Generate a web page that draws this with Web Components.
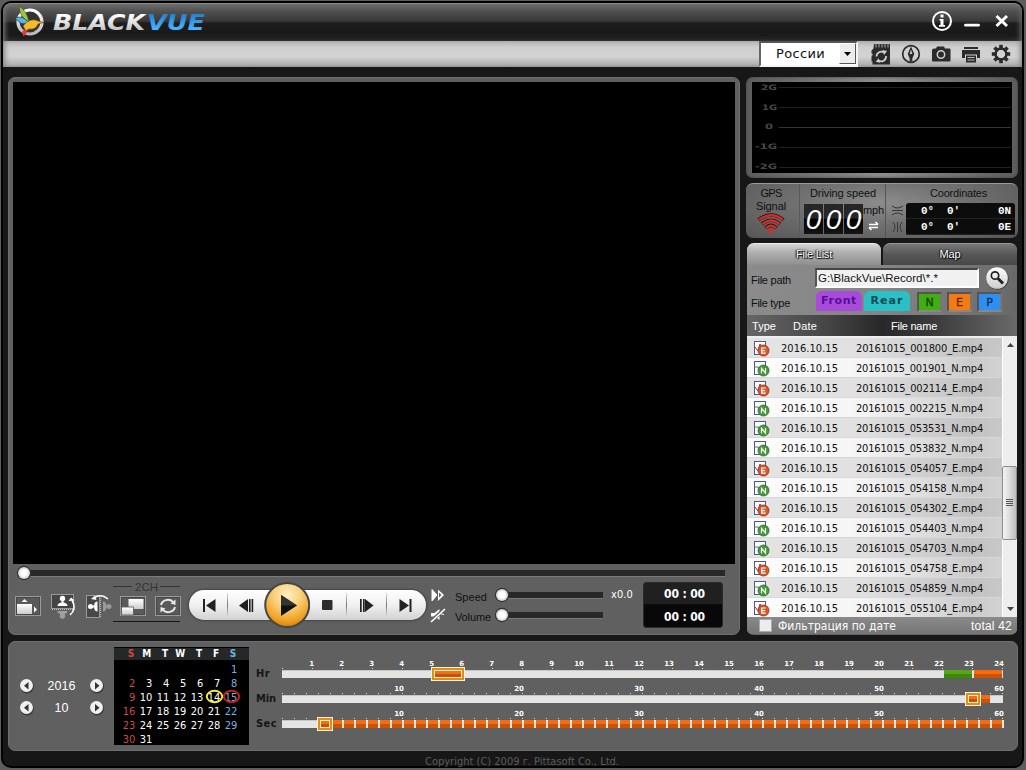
<!DOCTYPE html>
<html lang="en">
<head>
<meta charset="utf-8">
<title>BlackVue</title>
<style>
  body {
    margin: 0;
    width: 1026px;
    height: 770px;
    overflow: hidden;
    background: #5c5e5d;
    font-family: "Liberation Sans", sans-serif;
  }
</style>
</head>
<body>
<bv-app></bv-app>

<script>
// inline icon; the viewBox uses window coordinates
const icon = (x, y, w, h, body) =>
  `<svg width="${w}" height="${h}" viewBox="${x} ${y} ${w} ${h}">${body}</svg>`;

const base = `
  * { box-sizing: border-box; }
  svg { display: block; flex: none; }
`;

// label with a fixed width, the spare room goes between the letters
class BvLabel extends HTMLElement {
  constructor() {
    super();
    this.attachShadow({ mode: "open" });
  }

  connectedCallback() {
    this.shadowRoot.innerHTML = `
      <style>
        :host { display: block; flex: none; width: ${this.getAttribute("w")}px; }
        span { display: inline-block; white-space: pre; }
      </style><span><slot></slot></span>`;
    const span = this.shadowRoot.querySelector("span");
    const want = Number(this.getAttribute("w"));
    const count = this.textContent.length;
    const real = span.getBoundingClientRect().width;
    this.style.letterSpacing = (want - real) / count + "px";
  }
}
customElements.define("bv-label", BvLabel);

class BvTitle extends HTMLElement {
  constructor() {
    super();
    this.attachShadow({ mode: "open" });
    this.shadowRoot.innerHTML = `
      <style>
        ${base}
        :host {
          display: flex;
          justify-content: space-between;
          height: 38px;
          border-radius: 8px 8px 0 0;
          border-top: 1px solid #8a8a8a;
          background: linear-gradient(#6e6e6e 0, #505050 20%, #383838 46%, #1d1d1d 52%, #191919 82%, #262626 100%);
          box-shadow: inset 5px 0 5px -3px #777, inset -5px 0 5px -3px #666;
        }
      </style>
      ${icon(3, 4, 220, 36, `
        <defs>
          <linearGradient id="a" x2="0" y2="1"><stop offset=".2" stop-color="#fff"/><stop offset="1" stop-color="#b0b0b0"/></linearGradient>
          <linearGradient id="b" x2="0" y2="1"><stop offset=".2" stop-color="#2484d0"/><stop offset=".8" stop-color="#4db4ff"/></linearGradient>
          <linearGradient id="c" x2="0" y2="1"><stop offset="0" stop-color="#fff"/><stop offset="1" stop-color="#b8b8b8"/></linearGradient>
        </defs>
        <circle cx="30" cy="22" r="12" fill="#333" stroke="url(#c)" stroke-width="3.2"/>
        <path d="M19 6 Q27 11 29 22 Q20 18 19 6Z" fill="#9ac93a" stroke="#38501a" stroke-width=".6"/>
        <path d="M15 18 Q23 15 28 22 Q22 27 15 18Z" fill="#58b4e8" stroke="#234" stroke-width=".6"/>
        <path d="M23 26 Q30 17 38 21 L44 22.500 L38 24 Q36 30 29 29 L26 31Z" fill="#f5b92c" stroke="#6b4a10" stroke-width=".6"/>
        <path d="M25 29 L27.500 32 L23.500 36.500 L22 32Z" fill="#e33b2d"/>
        <g font-family="DejaVu Sans" font-weight="bold" font-style="italic" font-size="22">
          <text x="53" y="30" textLength="92" lengthAdjust="spacingAndGlyphs" fill="url(#a)">BLACK</text>
          <text x="147" y="30" textLength="58" lengthAdjust="spacingAndGlyphs" fill="url(#b)">VUE</text>
        </g>`)}
      ${icon(922, 4, 100, 36, `
        <g fill="none" stroke="#fff">
          <circle cx="942" cy="21" r="9" stroke-width="2"/>
          <path d="M965.500 25.200H978.500" stroke-width="2.800" stroke-linecap="round"/>
          <path d="M996.500 16L1007 26M1007 16L996.500 26" stroke-width="3"/>
        </g>
        <path d="M940.500 14.500h3v3h-3zM939.500 19h4v6h1.500v1.700h-6V25h1.500v-4.500h-1z" fill="#fff"/>`)}
    `;
  }
}
customElements.define("bv-title", BvTitle);

class BvToolbar extends HTMLElement {
  constructor() {
    super();
    this.attachShadow({ mode: "open" });
    let teeth = "";
    for (let a = 0; a < 360; a += 45) {
      teeth += `<rect x="999.200" y="44.800" width="3.600" height="5" transform="rotate(${a} 1001 54)"/>`;
    }
    this.shadowRoot.innerHTML = `
      <style>
        ${base}
        :host {
          display: flex;
          justify-content: flex-end;
          height: 26px;
          background: linear-gradient(#b4b4b4, #cfcfcf 25%, #d2d2d2 60%, #b4b4b4 88%, #9b9b9b);
          box-shadow: inset 5px 0 5px -3px #888, inset -5px 0 5px -3px #888;
        }
        .country {
          display: flex;
          justify-content: space-between;
          width: 99px;
          background: #fff;
          border: 2px solid #f4f4f4;
          border-top-color: #555;
          border-left-color: #666;
          padding-left: 15px;
          font: 13px/21px "DejaVu Sans", sans-serif;
          color: #111;
        }
        .drop {
          width: 17px;
          height: 21px;
          background: #ececec;
          border: 1px solid #fff;
          border-right-color: #555;
          border-bottom-color: #555;
        }
      </style>
      <div class="country">
        <bv-label w="49">России</bv-label>
        <div class="drop">${icon(0, 0, 15, 19, `<path d="M4 8h7L7.500 12z" fill="#000"/>`)}</div>
      </div>
      ${icon(858, 41, 164, 26, `
        <g fill="#2b2b2b">
          <path d="M874 44h16v20.500h-17.500v-3h-1v-6h1v-2h-1v-3l2-2z"/>
          <path d="M876 44v3.500M879 44v3.500M882 44v3.500M885 44v3.500M888 44v3.500" stroke="#aaa" stroke-width="1"/>
          <g fill="none" stroke="#d0d0d0" stroke-width="1.700">
            <path d="M876.500 56.500a4.800 4.800 0 0 1 7.500-4M886 56a4.800 4.800 0 0 1-7.500 4.500"/>
          </g>
          <path d="M882.500 50l4.500 1-3 4zM880 62.800l-4.300-1 3-3.600z" fill="#d0d0d0"/>
          <circle cx="911" cy="54" r="8.300" fill="none" stroke="#2b2b2b" stroke-width="1.700"/>
          <path d="M911 46.500l3.300 7.500-2 4.500v3h-2.600v-3l-2-4.500z"/>
          <path d="M911 49.500l1.300 4.500h-2.600z" fill="#ccc"/>
          <path d="M934 48.500h2l1-2h7l1 2h4.500q1 0 1 1v11q0 1-1 1H933q-1 0-1-1v-10q0-2 2-2z"/>
          <circle cx="941" cy="54.500" r="3.700" stroke="#ccc" stroke-width="1.500"/>
          <path d="M964 47h14v2h-14zM962 50h18v8h-3v-3.500h-12V58h-3z"/>
          <path d="M966 55.500h10V62.500h-10z"/>
          <path d="M967.500 57.500h7M967.500 60h7" stroke="#bbb" stroke-width="1"/>
          ${teeth}
          <circle cx="1001" cy="54" r="5.500" fill="none" stroke="#2b2b2b" stroke-width="2.400"/>
        </g>`)}
    `;
  }
}
customElements.define("bv-toolbar", BvToolbar);

class BvTransport extends HTMLElement {
  constructor() {
    super();
    this.attachShadow({ mode: "open" });
    this.shadowRoot.innerHTML = `
      <style>
        ${base}
        :host {
          display: flex;
          flex: none;
          align-items: center;
          width: 237px;
          height: 30px;
          margin: 10px 4px 0 8px;
          border-radius: 15px;
          background: linear-gradient(#fff, #f0f0f0 50%, #d2d2d2);
          box-shadow: 0 0 2px 1px #444;
        }
        i { display: block; flex: none; width: 1px; height: 24px; background: linear-gradient(#ddd, #777 50%, #ddd); }
      </style>
      ${icon(189, 590, 38, 30, `<path d="M203 599h2v13h-2zM215.500 599v13l-9.500-6.500z" fill="#222"/>`)}
      <i></i>
      ${icon(228, 590, 36, 30, `<path d="M248 599v13l-9-6.500zM249 599h1.600v13H249zM251.600 599h1.600v13h-1.600z" fill="#222"/>`)}
      ${icon(264, 582, 46, 46, `
        <defs><radialGradient id="p" cx=".5" cy=".25" r=".8"><stop offset="0" stop-color="#fff0c8"/><stop offset=".4" stop-color="#fad07c"/><stop offset=".8" stop-color="#f0a020"/><stop offset="1" stop-color="#c87a08"/></radialGradient></defs>
        <circle cx="287.200" cy="605" r="23" fill="#454545"/>
        <circle cx="287.200" cy="605" r="21" fill="url(#p)"/>
        <path d="M281 595v21l16-10.500z" fill="#111"/><path d="M281 595v10.500h16z" fill="#333"/>`)}
      ${icon(310, 590, 36, 30, `<rect x="322" y="600" width="10.500" height="10" rx="1" fill="#2c2c2c"/>`)}
      <i></i>
      ${icon(347, 590, 39, 30, `<path d="M360 599h1.700v13H360zM363 599h1.700v13H363zM365 599v13l8.500-6.500z" fill="#222"/>`)}
      <i></i>
      ${icon(387, 590, 39, 30, `<path d="M399.500 599v13l9.500-6.500zM409.500 599h2v13h-2z" fill="#222"/>`)}
    `;
  }
}
customElements.define("bv-transport", BvTransport);

class BvSlider extends HTMLElement {
  constructor() {
    super();
    this.attachShadow({ mode: "open" });
  }

  connectedCallback() {
    const w = Number(this.getAttribute("w"));
    this.shadowRoot.innerHTML = `
      <style>
        ${base}
        :host { display: block; flex: none; height: 16px; width: ${w}px; }
      </style>
      ${icon(0, 0, w, 16, `
        <defs><radialGradient id="k"><stop offset=".5" stop-color="#fff"/><stop offset="1" stop-color="#ccc"/></radialGradient></defs>
        <rect x="8" y="5" width="${w - 8}" height="6" fill="#282828"/>
        <path d="M8 11.500H${w}" stroke="#7b7b7b"/>
        <circle cx="8" cy="8" r="7.200" fill="#333"/>
        <circle cx="8" cy="8" r="6" fill="url(#k)"/>`)}
    `;
  }
}
customElements.define("bv-slider", BvSlider);

class BvPlayer extends HTMLElement {
  constructor() {
    super();
    this.attachShadow({ mode: "open" });
    const frame = (x) => `<rect x="${x + .5}" y="596.500" width="25" height="19" fill="#5a5a5a" stroke="#999"/><rect x="${x + 1.500}" y="597.500" width="23" height="17" fill="none" stroke="#484848"/>`;
    this.shadowRoot.innerHTML = `
      <style>
        ${base}
        :host {
          display: block;
          flex: none;
          width: 732px;
          height: 558px;
          border-radius: 7px;
          background: #606060;
          border: 1px solid #6e6e6e;
          padding: 4px;
          color: #111;
          font-size: 11px;
        }
        .screen { width: 722px; height: 482px; background: #000; }
        .seek { height: 15px; margin: 1px 10px 0 3px; }
        .controls { display: flex; height: 50px; }
        .sliders { display: grid; flex: none; grid-template-columns: 39px 109px 30px; height: 42px; margin: 6px 0 0 9px; grid-template-rows: 20px 20px; align-content: start; }
        .sliders bv-label { margin-top: 4px; line-height: 14px; }
        .sliders .rate { color: #fff; margin: 2px 0 0 8px; font: 11px/14px "DejaVu Sans Condensed", sans-serif; }
        .sliders bv-slider { margin-top: 1px; }
        .clock {
          flex: none;
          width: 80px; height: 46px; margin: 2px 0 0 10px;
          background: linear-gradient(#202020 48%, #080808 49%);
          border: 1px solid #2b2b2b; border-radius: 3px;
          color: #fff; font: bold 12px/23px "DejaVu Sans Condensed", sans-serif;
          padding-left: 20px;
        }
      </style>
      <div class="screen"></div>
      <div class="seek"><bv-slider w="709"></bv-slider></div>
      <div class="controls">
        ${icon(13, 580, 168, 50, `
          <defs><linearGradient id="w" x2="0" y2="1"><stop stop-color="#fff"/><stop offset="1" stop-color="#ccc"/></linearGradient></defs>
          ${frame(15)}
          <rect x="17" y="604" width="15" height="10" fill="url(#w)"/>
          <path d="M21.500 602l3-3 3 3zM34 606.500l3 3-3 3z" fill="#fff"/>
          <rect x="51.500" y="594.500" width="22" height="14" fill="#454545" stroke="#999"/>
          <path d="M52 609.500H75" stroke="#bbb" stroke-dasharray="1 1"/>
          <circle cx="62.500" cy="598.500" r="2.700" fill="#fff"/><path d="M57.500 606q0-3 4-3.500v-2h2v2q4 .5 4 3.500z" fill="#fff"/>
          <g opacity=".4"><circle cx="62.500" cy="616" r="2.700" fill="#fff"/><path d="M57.500 611q0 3 4 3v3h2v-3q4 0 4-3z" fill="#fff"/></g>
          <path d="M70 615q7-6 2-15" fill="none" stroke="#fff" stroke-width="1.600"/><path d="M68.500 601l2.500-3.500 3.500 3z" fill="#fff"/>
          <rect x="86.500" y="595.500" width="13" height="22" fill="#484848" stroke="#999"/>
          <path d="M100.500 598V618" stroke="#bbb" stroke-dasharray="1 1"/>
          <circle cx="90.500" cy="606.500" r="2.500" fill="#fff"/><path d="M97.500 601.500q-3 0-3.500 4h-2v2h2q.5 4 3.500 4z" fill="#fff"/>
          <circle cx="109" cy="606.500" r="2.500" fill="#999"/><path d="M103 601.500q3 0 3.500 4h2v2h-2q-.5 4-3.500 4z" fill="#999"/>
          <path d="M94 598q7-5 14 1" fill="none" stroke="#fff" stroke-width="1.600"/><path d="M91 599l4-3.500 1.500 4.500z" fill="#fff"/>
          <path d="M113 586.500H132M160 586.500H180" stroke="#333"/><path d="M113 621.500H180" stroke="#161616"/>
          <text x="135" y="591" font-size="11.500" textLength="23" fill="#343434">2CH</text>
          ${frame(120)}
          <rect x="128.500" y="599" width="15" height="10" fill="url(#w)"/><rect x="121.500" y="607" width="12" height="8" fill="url(#w)" stroke="#555" stroke-width=".8"/>
          ${frame(155)}
          <g fill="none" stroke="#e8e8e8" stroke-width="2"><path d="M161 605a7 6.500 0 0 1 12-3M175 607a7 6.500 0 0 1-12 3"/></g>
          <path d="M170.500 603.500l5-4v5.500zM165.500 608.500l-5 4v-5.500z" fill="#e8e8e8"/>`)}
        <bv-transport></bv-transport>
        ${icon(430, 580, 16, 50, `
          <path d="M432 589.500l5 5.500-5 6zM438 590l5.500 5-5.500 5.500" fill="#fff" stroke="#fff" stroke-width="1"/>
          <path d="M439 592.500l2.500 2.500-2.500 2.500z" fill="#606060"/>
          <path d="M431 613h3.500l5-4v11l-4.500-3.500h-4z" fill="#fff"/><path d="M431 621.500L445 608.500" stroke="#606060" stroke-width="3.500"/><path d="M431 622L445 609" stroke="#fff" stroke-width="1.700"/><path d="M441 614l3 .5" stroke="#fff"/>`)}
        <div class="sliders">
          <bv-label w="32">Speed</bv-label><bv-slider w="109"></bv-slider><bv-label class="rate" w="22">x0.0</bv-label>
          <bv-label w="36">Volume</bv-label><bv-slider w="109"></bv-slider>
        </div>
        <div class="clock"><bv-label w="41">00 : 00</bv-label><bv-label w="41">00 : 00</bv-label></div>
      </div>
    `;
  }
}
customElements.define("bv-player", BvPlayer);

class BvGraph extends HTMLElement {
  constructor() {
    super();
    this.attachShadow({ mode: "open" });
    const rows = [["2G", 761, 16], ["1G", 762, 15], ["0", 765, 8], ["-1G", 755, 22], ["-2G", 755, 22]];
    const lines = rows.map(([t, x, len], i) => `
      <path d="M779 ${87.5 + i * 20}H1011" stroke="${i == 2 ? "#333" : "#202020"}"/>
      <text x="${x}" y="${90 + i * 19.7}" textLength="${len}" lengthAdjust="spacingAndGlyphs">${t}</text>`).join("");
    this.shadowRoot.innerHTML = `
      <style>
        ${base}
        :host {
          display: block;
          height: 101px;
          padding: 5px 6px;
          border-radius: 7px;
          background: linear-gradient(90deg, #5c5c5c, #8c8c8c 50%, #5c5c5c);
          box-shadow: inset 0 0 3px #444;
        }
        svg { background: #000; }
      </style>
      ${icon(752, 82, 260, 91, `<g font-family="DejaVu Sans" font-weight="bold" font-size="7.500" fill="#484848">${lines}</g>`)}
    `;
  }
}
customElements.define("bv-graph", BvGraph);

class BvGps extends HTMLElement {
  constructor() {
    super();
    this.attachShadow({ mode: "open" });
    this.shadowRoot.innerHTML = `
      <style>
        ${base}
        :host {
          display: flex;
          height: 55px;
          border-radius: 7px;
          background: radial-gradient(ellipse at 50% 35%, #8c8c8c, #707070 45%, #565656);
          border-top: 1px solid #999;
          color: #111;
          font-size: 11px;
          line-height: 13px;
        }
        .signal { display: flex; flex: none; flex-direction: column; align-items: center; width: 54px; padding: 3px 3px 0 0; border-right: 1px solid #5a5a5a; }
        .speed { flex: none; width: 86px; padding: 3px 0 0 10px; border-right: 1px solid #555; }
        .row { display: flex; margin: 4px 0 0 -6px; }
        .digits { display: flex; gap: 1px; font: italic 28px/31px "Liberation Sans", sans-serif; color: #fff; }
        .digits span { width: 19px; height: 30px; background: linear-gradient(#262626 48%, #000 49%, #151515); text-align: center; }
        .place { width: 132px; padding-top: 3px; }
        .place > bv-label { margin-left: 44px; }
        .grid { display: flex; margin-top: 3px; }
        .coords { width: 109px; background: #0c0c0c; border-radius: 3px; font: bold 11px/17px "Liberation Mono", monospace; color: #fff; }
        .coords div { display: grid; grid-template-columns: 26px 51px 1fr; height: 16px; padding-left: 15px; border-bottom: 1px solid #222; white-space: pre; }
      </style>
      <div class="signal">
        <bv-label w="21">GPS</bv-label><bv-label w="30">Signal</bv-label>
        ${icon(757, 211, 30, 23, `
          <g fill="none" stroke="#3a1010" stroke-width="3.600"><path d="M759.500 218q12.500-10 25 0M763 222q9-7.500 18 0M766.500 226q5.500-5 11 0"/></g>
          <g fill="none" stroke="#c8302c" stroke-width="2.400"><path d="M760 218q12-9.500 24 0M763.500 222q8.500-7 17 0M767 226q5-4.500 10 0"/></g>
          <path d="M768.500 228q3.500-3 7 0l-3.500 4z" fill="#c8302c"/>`)}
      </div>
      <div class="speed">
        <bv-label w="66">Driving speed</bv-label>
        <div class="row">
          <div class="digits"><span>0</span><span>0</span><span>0</span></div>
          <div><bv-label w="21">mph</bv-label>${icon(863, 217, 22, 15, `<path d="M869 224.500h9M869 227.500h9" stroke="#fff" stroke-width="1.300"/><path d="M875.500 222l2.500 2.500M871.500 230l-2.500-2.500" stroke="#fff" stroke-width="1.500"/>`)}</div>
        </div>
      </div>
      <div class="place">
        <bv-label w="57">Coordinates</bv-label>
        <div class="grid">
          ${icon(886, 203, 20, 32, `<path d="M892 206q5 4 11 0M892 210.500h11M892 215q5-4 11 0M893 222q4 5 0 10M897.500 222v10M902 222q-4 5 0 10" fill="none" stroke="#353535"/>`)}
          <div class="coords"><div><span>0°</span><span>0'</span><span>0N</span></div><div><span>0°</span><span>0'</span><span>0E</span></div></div>
        </div>
      </div>
    `;
  }
}
customElements.define("bv-gps", BvGps);

class BvFiles extends HTMLElement {
  constructor() {
    super();
    this.attachShadow({ mode: "open" });
    const names = ["001800_E", "001901_N", "002114_E", "002215_N", "053531_N", "053832_N", "054057_E",
      "054158_N", "054302_E", "054403_N", "054703_N", "054758_E", "054859_N", "055104_E"];
    const rows = names.map((n) => {
      const kind = n.slice(-1);
      const color = kind == "E" ? "#d4572a" : "#46963a";
      return `<div class="file">
        ${icon(0, 0, 34, 20, `
          <rect x="7.500" y="3.500" width="11" height="13" fill="#fff" stroke="#4b5a88"/>
          <path d="${kind == "E" ? "M8 9l3 4 2-7 2 3" : "M8 9h3l2 3 3-4"}" fill="none" stroke="${kind == "E" ? "#b22" : "#585"}"/>
          <circle cx="16.500" cy="12.500" r="5.500" fill="${color}" stroke="${kind == "E" ? "#8c3115" : "#2a6a24"}" stroke-width=".8"/>
          <path d="${kind == "E" ? "M18.700 10h-4v5.200h4M14.700 12.600h3.500" : "M14.500 15.300v-5l4 4.700v-5"}" fill="none" stroke="#fff" stroke-width="1.200"/>`)}
        <bv-label w="57">2016.10.15</bv-label><bv-label class="name" w="127">20161015_${n}.mp4</bv-label>
      </div>`;
    }).join("");
    this.shadowRoot.innerHTML = `
      <style>
        ${base}
        :host { display: block; height: 392px; font-size: 11px; color: #111; border-radius: 0 0 8px 8px; overflow: hidden; }
        .tabs { display: flex; gap: 2px; height: 22px; padding: 0 1px; }
        .tab {
          display: flex; justify-content: center; width: 134px; border-radius: 7px 7px 0 0;
          color: #fff; line-height: 21px;
          background: linear-gradient(#777, #575757 50%, #484848);
          text-shadow: 0 0 2px #000, 1px 1px 1px #000, -1px 0 1px #222;
          border-top: 1px solid #999;
        }
        .tab.on { background: linear-gradient(#d5d5d5, #b0b0b0 40%, #8e8e8e); border-top-color: #eee; }
        .panel { margin: 0 1px; background: linear-gradient(100deg, #8b8b8b, #858585 50%, #676767); height: 71px; }
        .line { display: flex; align-items: center; height: 25px; padding-left: 4px; }
        .path { width: 164px; height: 20px; margin: 1px 6px 0 24px; background: #f1f1f1; border: 2px solid #fff; border-top-color: #444; border-left-color: #555; padding: 0 1px; line-height: 16px; font-size: 11.500px; }
        .kinds { height: 25px; align-items: flex-start; }
        .kinds > bv-label:first-child { margin: 7px 26px 0 0; }
        .pill { display: flex; flex: none; justify-content: center; width: 46px; height: 20px; border-radius: 6px 6px 0 0; margin: 1px 2px 0 0; font: bold 11px/20px "DejaVu Sans", sans-serif; }
        .kind { flex: none; width: 25px; height: 20px; margin: 2px 0 0 5px; border: 2px solid #555; border-right-color: #777; border-bottom-color: #888; text-align: center; font: 11px/17px "DejaVu Sans", sans-serif; -webkit-text-stroke: .3px; }
        .head { display: flex; height: 21px; color: #fff; line-height: 23px; padding-left: 5px; background: linear-gradient(90deg, #666, #454545 30%, #282828 50%, #3c3c3c 70%, #6a6a6a); }
        .date { margin-left: 17px; }
        .title { margin-left: 74px; }
        .list { display: flex; height: 281px; margin: 0 1px; overflow: hidden; background: #eee; }
        .files { width: 255px; padding-top: 2px; }
        .file { display: flex; height: 20px; background: linear-gradient(90deg, #e4e4e4 0, #e0e0e0 45%, #c2c2c2 88%, #c8c8c8); font: 11px/21px "DejaVu Sans Condensed", sans-serif; border-bottom: 1px solid #d8d8d8; }
        .file:nth-child(even) { background: linear-gradient(90deg, #fdfdfd 0, #f5f5f5 45%, #cbcbcb 88%, #d2d2d2); }
        .name { margin-left: 18px; }
        .foot { display: flex; align-items: center; height: 18px; margin: 0 1px; background: linear-gradient(#8a8a8a, #757575); color: #fff; border-bottom: 1px solid #666; }
        .box { width: 13px; height: 13px; background: #ececec; border: 1px solid #aaa; margin: 0 6px 0 12px; }
        .foot .filter { font: 12px/16px "DejaVu Sans Condensed", sans-serif; }
        .total { margin-left: 75px; font-size: 12px; }
      </style>
      <div class="tabs">
        <div class="tab on"><bv-label w="36">File List</bv-label></div>
        <div class="tab"><bv-label w="21">Map</bv-label></div>
      </div>
      <div class="panel">
        <div class="line">
          <bv-label style="margin-top:5px" w="40">File path</bv-label>
          <div class="path"><bv-label w="120">G:\\BlackVue\\Record\\*.*</bv-label></div>
          ${icon(984, 267, 24, 24, `
            <defs><linearGradient id="s" x2="0" y2="1"><stop stop-color="#fff"/><stop offset="1" stop-color="#ccc"/></linearGradient></defs>
            <circle cx="996.500" cy="279.500" r="11.300" fill="#444"/><circle cx="996" cy="279" r="10.800" fill="url(#s)"/>
            <circle cx="994" cy="276.500" r="3.700" fill="none" stroke="#222" stroke-width="1.700"/><path d="M997 279.500l5 5" stroke="#222" stroke-width="3"/>`)}
        </div>
        <div class="line kinds">
          <bv-label w="39">File type</bv-label>
          <div class="pill" style="background:#a94bd8;color:#54109c"><bv-label w="36">Front</bv-label></div>
          <div class="pill" style="background:#2dbfc6;color:#0a4c52"><bv-label w="33">Rear</bv-label></div>
          <div class="kind" style="background:#3fae12;color:#114400">N</div>
          <div class="kind" style="background:#f47a14;color:#6a2500">E</div>
          <div class="kind" style="background:#2f8ff0;color:#062a66">P</div>
        </div>
        <div class="head">
          <bv-label w="24">Type</bv-label>
          <bv-label class="date" w="24">Date</bv-label>
          <bv-label class="title" w="46">File name</bv-label>
        </div>
      </div>
      <div class="list">
        <div class="files">${rows}</div>
        ${icon(1002, 336, 15, 281, `
          <defs><linearGradient id="t"><stop stop-color="#f6f6f6"/><stop offset=".5" stop-color="#dcdcdc"/><stop offset="1" stop-color="#bbb"/></linearGradient></defs>
          <path d="M1002.500 336V617" stroke="#fff"/>
          <path d="M1007 347h7l-3.500-4zM1007 607h7l-3.500 4z" fill="#444"/>
          <rect x="1002.500" y="466.500" width="14" height="73" rx="1.500" fill="url(#t)" stroke="#8c8c8c"/>
          <path d="M1006 499.500h7M1006 501.500h7M1006 503.500h7M1006 505.500h7" stroke="#555"/>`)}
      </div>
      <div class="foot">
        <div class="box"></div>
        <bv-label class="filter" w="118">Фильтрация по дате</bv-label>
        <bv-label class="total" w="41">total 42</bv-label>
      </div>
    `;
  }
}
customElements.define("bv-files", BvFiles);

class BvCalendar extends HTMLElement {
  constructor() {
    super();
    this.attachShadow({ mode: "open" });
    let cells = ["S", "M", "T", "W", "T", "F", "S"].map((d) => `<b>${d}</b>`).join("");
    for (let i = 0; i < 6; i++) cells += "<span></span>";
    for (let d = 1; d <= 31; d++) cells += `<span>${d}</span>`;
    this.shadowRoot.innerHTML = `
      <style>
        ${base}
        :host { display: block; flex: none; position: relative; width: 135px; height: 98px; background: #000; overflow: hidden; }
        .days {
          display: grid;
          grid-template-columns: repeat(7, 17px);
          grid-template-rows: 15px;
          grid-auto-rows: 14px;
          height: 98px;
          padding: 1px 12px 0 4px;
          background: linear-gradient(#000 1px, #252829 1px 13px, #000 13px);
          font: 11px/14px "DejaVu Sans Condensed", sans-serif;
          letter-spacing: -.2px;
          text-align: right;
          color: #fff;
          white-space: nowrap;
        }
        b { line-height: 12px; font-size: 10px; padding-right: 1px; }
        .days > :nth-child(7n + 1) { color: #cf4a45; }
        .days > :nth-child(7n) { color: #6fb4e0; }
        svg { position: absolute; left: 0; top: 0; }
      </style>
      <div class="days">${cells}</div>
      ${icon(114, 647, 135, 98, `
        <ellipse cx="214.500" cy="696.500" rx="7.700" ry="5.700" fill="none" stroke="#f3ee3c" stroke-width="1.900"/>
        <ellipse cx="231.500" cy="696.500" rx="7.700" ry="5.700" fill="none" stroke="#c81e1e" stroke-width="1.900"/>`)}
    `;
  }
}
customElements.define("bv-calendar", BvCalendar);

class BvTimeline extends HTMLElement {
  constructor() {
    super();
    this.attachShadow({ mode: "open" });
    const bar = (y) => `<rect x="282" y="${y}" width="721" height="8" fill="#e4e4e4"/><rect x="282" y="${y}" width="721" height="1" fill="#c6c6c6"/>`;
    const orange = (x, y, w) => `<rect x="${x}" y="${y}" width="${w}" height="4" fill="#f36b12"/><rect x="${x}" y="${y + 4}" width="${w}" height="4" fill="#cd5206"/>`;
    const grip = (x, y, w) => `
      <rect x="${x}" y="${y}" width="${w}" height="14" fill="#fff3d2"/>
      <rect x="${x + 1}" y="${y + 1}" width="${w - 2}" height="12" fill="#e08c1e"/>
      <rect x="${x + 3}" y="${y + 3}" width="${w - 6}" height="8" fill="#fff0bc"/>
      <rect x="${x + 4}" y="${y + 4}" width="${w - 8}" height="3" fill="#f07018"/>
      <rect x="${x + 4}" y="${y + 7}" width="${w - 8}" height="3" fill="#c85008"/>`;
    let ticks = "";
    let nums = "";
    for (let i = 0; i <= 24; i++) {
      ticks += `<rect x="${282 + i * 30}" y="668" width="1" height="1"/>`;
      if (i) nums += `<text x="${284 + i * 30}" y="666">${i}</text>`;
    }
    for (const y of [693, 718]) {
      for (let i = 0; i <= 60; i++) ticks += `<rect x="${282 + i * 12}" y="${y}" width="1" height="1"/>`;
      for (let i = 1; i <= 6; i++) nums += `<text x="${284 + i * 120}" y="${y - 2}">${i * 10}</text>`;
    }
    let gaps = "";
    for (let x = 342; x <= 1002; x += 12) gaps += `<rect x="${x}" y="720" width="2" height="8" fill="#f2e6de"/>`;
    this.shadowRoot.innerHTML = `
      <style>
        ${base}
        :host { display: flex; flex: none; }
        .names { width: 26px; font: bold 11px/25px "DejaVu Sans Condensed", sans-serif; color: #161616; padding-top: 14px; }
      </style>
      <div class="names"><bv-label w="14">Hr</bv-label><bv-label w="20">Min</bv-label><bv-label w="21">Sec</bv-label></div>
      ${icon(282, 647, 724, 98, `
        <g fill="#ddd">${ticks}</g>
        <g fill="#fff" text-anchor="end" font-family="DejaVu Sans" font-weight="bold" font-size="7">${nums}</g>
        ${bar(670)}${bar(695)}${bar(720)}
        <rect x="944" y="670" width="28" height="4" fill="#5aa51e"/><rect x="944" y="674" width="28" height="4" fill="#3d8a08"/>
        ${orange(974, 670, 28)}${grip(431, 667, 34)}
        ${orange(981, 695, 9)}${grip(965, 692, 16)}
        ${orange(333, 720, 669)}${gaps}${grip(317, 717, 16)}`)}
    `;
  }
}
customElements.define("bv-timeline", BvTimeline);

class BvDatebar extends HTMLElement {
  constructor() {
    super();
    this.attachShadow({ mode: "open" });
    const arrow = (d) => icon(0, 0, 15, 16, `
      <circle cx="8" cy="8.500" r="7" fill="#3c3c3c"/><circle cx="7.500" cy="7.500" r="6.500" fill="#f0f0f0"/>
      <path d="${d}" fill="#333"/>`);
    const left = arrow("M9.500 4v7.500L5 7.700z");
    const right = arrow("M6 4v7.500l4.500-3.800z");
    this.shadowRoot.innerHTML = `
      <style>
        ${base}
        :host { display: flex; height: 110px; border-radius: 7px; background: #606060; border: 1px solid #6e6e6e; padding: 5px 0 0 10px; }
        .nav { display: grid; flex: none; grid-template-columns: 15px 55px 15px; grid-auto-rows: 22px; justify-items: center; width: 95px; padding-top: 31px; color: #fff; font-size: 12.500px; line-height: 16px; }
        bv-timeline { margin-left: 7px; }
      </style>
      <div class="nav">
        ${left}<bv-label w="28">2016</bv-label>${right}
        ${left}<bv-label w="14">10</bv-label>${right}
      </div>
      <bv-calendar></bv-calendar>
      <bv-timeline></bv-timeline>
    `;
  }
}
customElements.define("bv-datebar", BvDatebar);

class BvApp extends HTMLElement {
  constructor() {
    super();
    this.attachShadow({ mode: "open" });
    this.shadowRoot.innerHTML = `
      <style>
        ${base}
        :host { display: block; padding: 1px 2px 2px 1px; }
        .window { height: 767px; border: 2px solid #000; border-radius: 10px; background: #171717; }
        .main { display: flex; gap: 6px; padding: 10px 4px 0 5px; }
        .side { display: flex; flex: none; flex-direction: column; gap: 5px; width: 272px; }
        bv-datebar { margin: 6px 4px 0 5px; }
        .copy { display: flex; justify-content: center; margin-top: 2px; padding-left: 19px; color: #5c5c5c; font: 11px/17px "DejaVu Sans Condensed", sans-serif; }
      </style>
      <div class="window">
        <bv-title></bv-title>
        <bv-toolbar></bv-toolbar>
        <div class="main">
          <bv-player></bv-player>
          <div class="side">
            <bv-graph></bv-graph>
            <bv-gps></bv-gps>
            <bv-files></bv-files>
          </div>
        </div>
        <bv-datebar></bv-datebar>
        <div class="copy"><bv-label w="194">Copyright (C) 2009 г. Pittasoft Co., Ltd.</bv-label></div>
      </div>
    `;
  }
}
customElements.define("bv-app", BvApp);
</script>
</body>
</html>
